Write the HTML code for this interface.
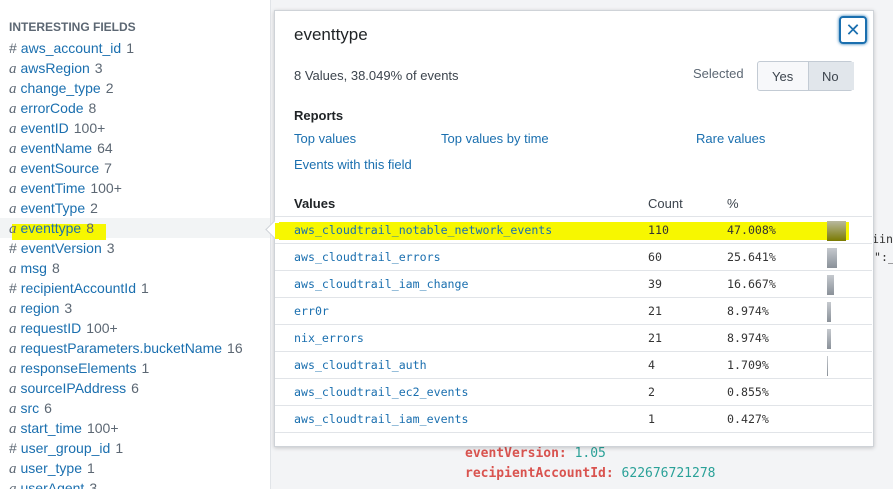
<html><head><style>
html,body{margin:0;width:893px;height:489px;overflow:hidden}
body{background:#f3f4f6;font-family:"Liberation Sans",sans-serif;position:relative}
#left{position:absolute;left:0;top:0;width:270px;height:489px;background:#fff;border-right:1px solid #e1e4e8}
.h{position:absolute;left:9px;top:20px;font-size:12px;color:#5c6773;font-weight:bold;letter-spacing:0}
.f{position:absolute;left:0;width:270px;height:20px;font-size:14px;line-height:20px;color:#1a6faf;padding-left:9px;box-sizing:border-box;white-space:nowrap}
.f i{font-family:"Liberation Serif",serif;color:#5c6773;font-size:15px;margin-right:4px}
.f b{font-weight:normal;color:#5c6773;font-style:normal;margin-right:4px}
.f s{text-decoration:none;color:#5c6773;margin-left:5px}
#pop{position:absolute;left:274px;top:10px;width:598px;height:435px;background:#fff;border:1px solid #cfd3d8;box-shadow:0 1px 4px rgba(0,0,0,.2)}
.a{color:#1a6faf;font-size:13px;position:absolute}
.mono{font-family:"DejaVu Sans Mono","Liberation Mono",monospace;font-size:11.6px}
.row{position:absolute;left:0;width:597px;height:26px;border-bottom:1px solid #e1e4e8;line-height:26px}
.row span{position:absolute}
.bar{position:absolute;left:552px;top:4px;height:20px;background:linear-gradient(#c5c9ce,#8a9199)}
</style></head><body>
<div id="left">
<div class="h">INTERESTING FIELDS</div>
<div class="f" style="top:38px"><b>#</b>aws_account_id<s>1</s></div>
<div class="f" style="top:58px"><i>a</i>awsRegion<s>3</s></div>
<div class="f" style="top:78px"><i>a</i>change_type<s>2</s></div>
<div class="f" style="top:98px"><i>a</i>errorCode<s>8</s></div>
<div class="f" style="top:118px"><i>a</i>eventID<s>100+</s></div>
<div class="f" style="top:138px"><i>a</i>eventName<s>64</s></div>
<div class="f" style="top:158px"><i>a</i>eventSource<s>7</s></div>
<div class="f" style="top:178px"><i>a</i>eventTime<s>100+</s></div>
<div class="f" style="top:198px"><i>a</i>eventType<s>2</s></div>
<div class="f" style="top:218px;background:#f2f4f5"><div style="position:absolute;left:12px;top:6px;width:94px;height:16px;background:#f7f700"></div><span style="position:relative"><i>a</i>eventtype<s>8</s></span></div>
<div class="f" style="top:238px"><b>#</b>eventVersion<s>3</s></div>
<div class="f" style="top:258px"><i>a</i>msg<s>8</s></div>
<div class="f" style="top:278px"><b>#</b>recipientAccountId<s>1</s></div>
<div class="f" style="top:298px"><i>a</i>region<s>3</s></div>
<div class="f" style="top:318px"><i>a</i>requestID<s>100+</s></div>
<div class="f" style="top:338px"><i>a</i>requestParameters.bucketName<s>16</s></div>
<div class="f" style="top:358px"><i>a</i>responseElements<s>1</s></div>
<div class="f" style="top:378px"><i>a</i>sourceIPAddress<s>6</s></div>
<div class="f" style="top:398px"><i>a</i>src<s>6</s></div>
<div class="f" style="top:418px"><i>a</i>start_time<s>100+</s></div>
<div class="f" style="top:438px"><b>#</b>user_group_id<s>1</s></div>
<div class="f" style="top:458px"><i>a</i>user_type<s>1</s></div>
<div class="f" style="top:478px"><i>a</i>userAgent<s>3</s></div>
</div>
<div class="mono" style="position:absolute;left:872px;top:232px;color:#333">iinu</div>
<div class="mono" style="position:absolute;left:874px;top:250px;color:#333">":_</div>
<div class="mono" style="position:absolute;left:465px;top:446px;font-size:13px;font-weight:bold;color:#d9534f">eventVersion: <span style="font-weight:normal;color:#2aa198">1.05</span></div>
<div class="mono" style="position:absolute;left:465px;top:466px;font-size:13px;font-weight:bold;color:#d9534f">recipientAccountId: <span style="font-weight:normal;color:#2aa198">622676721278</span></div>
<div id="pop">
<div style="position:absolute;left:-7px;top:212px;width:12px;height:12px;background:#fff;border-left:1px solid #cfd3d8;border-bottom:1px solid #cfd3d8;transform:rotate(45deg)"></div>
<div style="position:absolute;left:0;top:212px;width:10px;height:16px;background:#f7f700"></div>
<div style="position:absolute;left:19px;top:14px;font-size:17px;color:#1f2326">eventtype</div>
<div style="position:absolute;left:564px;top:5px;width:28px;height:28px;border:2px solid #1a6faf;border-radius:4px;box-sizing:border-box;box-shadow:0 0 3px #1a6faf;text-align:center;line-height:24px;font-size:18px;color:#1a6faf">✕</div>
<div style="position:absolute;left:19px;top:57px;font-size:13px;color:#3c444d">8 Values, 38.049% of events</div>
<div style="position:absolute;left:418px;top:55px;font-size:13px;color:#5c6773">Selected</div>
<div style="position:absolute;left:482px;top:50px;width:96px;height:30px;border:1px solid #c3cbd4;border-radius:3px;background:#f7f8fa;font-size:13px;color:#3c444d;box-sizing:border-box">
<span style="position:absolute;left:14px;top:7px">Yes</span>
<div style="position:absolute;left:50px;top:0;width:45px;height:28px;background:#e1e6eb;border-left:1px solid #c3cbd4"><span style="position:absolute;left:13px;top:7px">No</span></div></div>
<div style="position:absolute;left:19px;top:97px;font-size:13px;color:#1f2326;font-weight:bold">Reports</div>
<div class="a" style="left:19px;top:120px">Top values</div>
<div class="a" style="left:166px;top:120px">Top values by time</div>
<div class="a" style="left:421px;top:120px">Rare values</div>
<div class="a" style="left:19px;top:146px">Events with this field</div>
<div style="position:absolute;left:19px;top:185px;font-size:13px;font-weight:bold;color:#1f2326">Values</div>
<div style="position:absolute;left:373px;top:185px;font-size:13px;color:#3c444d">Count</div>
<div style="position:absolute;left:452px;top:185px;font-size:13px;color:#3c444d">%</div>
<div style="position:absolute;left:0;top:205px;width:597px;border-bottom:1px solid #e1e4e8"></div>
<div class="row mono" style="top:206px"><div style="position:absolute;left:4px;top:5px;width:570px;height:18px;background:#f7f700"></div><span class="a mono" style="left:19px">aws_cloudtrail_notable_network_events</span><span style="left:373px;color:#333">110</span><span style="left:452px;color:#333">47.008%</span><div class="bar" style="width:19px;background:linear-gradient(#b8b8a0,#7a7a00)"></div></div>
<div class="row mono" style="top:233px"><span class="a mono" style="left:19px">aws_cloudtrail_errors</span><span style="left:373px;color:#333">60</span><span style="left:452px;color:#333">25.641%</span><div class="bar" style="width:10px"></div></div>
<div class="row mono" style="top:260px"><span class="a mono" style="left:19px">aws_cloudtrail_iam_change</span><span style="left:373px;color:#333">39</span><span style="left:452px;color:#333">16.667%</span><div class="bar" style="width:7px"></div></div>
<div class="row mono" style="top:287px"><span class="a mono" style="left:19px">err0r</span><span style="left:373px;color:#333">21</span><span style="left:452px;color:#333">8.974%</span><div class="bar" style="width:4px"></div></div>
<div class="row mono" style="top:314px"><span class="a mono" style="left:19px">nix_errors</span><span style="left:373px;color:#333">21</span><span style="left:452px;color:#333">8.974%</span><div class="bar" style="width:4px"></div></div>
<div class="row mono" style="top:341px"><span class="a mono" style="left:19px">aws_cloudtrail_auth</span><span style="left:373px;color:#333">4</span><span style="left:452px;color:#333">1.709%</span><div class="bar" style="width:1px"></div></div>
<div class="row mono" style="top:368px"><span class="a mono" style="left:19px">aws_cloudtrail_ec2_events</span><span style="left:373px;color:#333">2</span><span style="left:452px;color:#333">0.855%</span></div>
<div class="row mono" style="top:395px"><span class="a mono" style="left:19px">aws_cloudtrail_iam_events</span><span style="left:373px;color:#333">1</span><span style="left:452px;color:#333">0.427%</span></div>
</div>
</body></html>
